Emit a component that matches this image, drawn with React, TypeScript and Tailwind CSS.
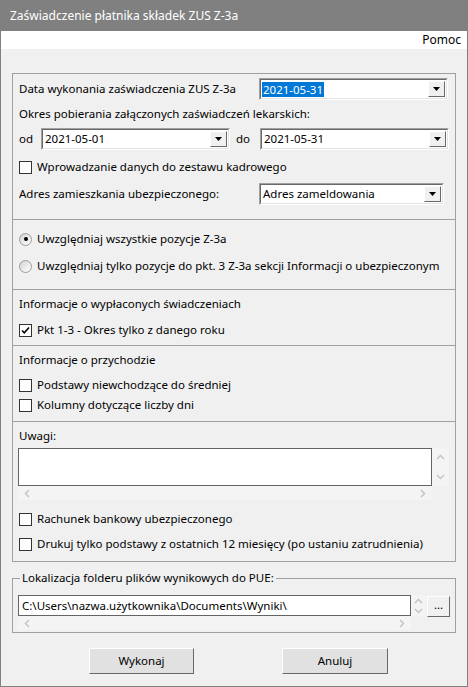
import React from "react";

const font = { fontFamily: '"Noto Sans", "Liberation Sans", sans-serif' };

function DropBtn() {
  return (
    <div className="w-[17px] h-full bg-[#f0f0f0] border border-t-white border-l-white border-b-[#696969] border-r-[#696969] flex items-center justify-center shrink-0">
      <svg width="7" height="4" viewBox="0 0 7 4"><path d="M0 0h7L3.5 4z" fill="#000" /></svg>
    </div>
  );
}

function Combo({ value, w, selected }: { value: string; w: string; selected?: boolean }) {
  return (
    <div className={`${w} h-[22px] border border-t-[#a0a0a0] border-l-[#a0a0a0] border-b-white border-r-white flex shrink-0`}>
      <div className="flex-1 flex border border-t-[#696969] border-l-[#696969] border-b-[#e3e3e3] border-r-[#e3e3e3] bg-white">
        <div className="flex-1 flex items-center pl-[1px]">
          <span className={selected ? "bg-[#0078d7] text-white px-[1px] leading-[15px]" : "px-[1px]"}>{value}</span>
        </div>
        <div className="p-[1px] h-full"><DropBtn /></div>
      </div>
    </div>
  );
}

function Check({ checked, label }: { checked?: boolean; label: string }) {
  return (
    <div className="flex items-center gap-[5px] h-[16px] whitespace-nowrap">
      <div className="w-[13px] h-[13px] border border-[#333333] bg-white flex items-center justify-center shrink-0">
        {checked && (
          <svg width="9" height="9" viewBox="0 0 9 9"><path d="M1 4.5l2.3 2.3L8 1.5" stroke="#000" strokeWidth="1.6" fill="none" /></svg>
        )}
      </div>
      <span>{label}</span>
    </div>
  );
}

function Radio({ checked, label }: { checked?: boolean; label: string }) {
  return (
    <div className="flex items-center gap-[5px] h-[16px] whitespace-nowrap">
      <div className="w-[13px] h-[13px] rounded-full border border-[#9a9a9a] bg-gradient-to-br from-[#d4d4d4] to-white flex items-center justify-center shrink-0">
        {checked && <div className="w-[4px] h-[4px] rounded-full bg-black" />}
      </div>
      <span>{label}</span>
    </div>
  );
}

function Chev({ d }: { d: string }) {
  return (
    <svg width="9" height="9" viewBox="0 0 9 9"><path d={d} stroke="#c4c4c4" strokeWidth="1.5" fill="none" /></svg>
  );
}

function Divider() {
  return <div className="h-px bg-[#a0a0a0] shrink-0" />;
}

function Btn({ label, w }: { label: string; w: string }) {
  return (
    <div className={`${w} h-[26px] bg-[#e1e1e1] border border-t-white border-l-white border-b-[#696969] border-r-[#696969] flex items-center justify-center`}>
      {label}
    </div>
  );
}

export default function App() {
  return (
    <div className="w-[468px] h-[687px] bg-[#f0f0f0] border border-[#808080] flex flex-col text-[11.5px] leading-[16px] text-black overflow-hidden" style={font}>
      <div className="h-[30px] bg-[#808080] text-white flex items-center pl-[9px] text-[12px] shrink-0">
        Zaświadczenie płatnika składek ZUS Z-3a
      </div>
      <div className="h-[18px] bg-white flex items-center justify-end pr-[6px] shrink-0 text-[12px]">Pomoc</div>

      <div className="flex flex-col px-[11px] pt-[24px]">
        <div className="border border-[#a0a0a0] flex flex-col">
          {/* Section 1 */}
          <div className="flex flex-col px-[6px] pt-[4px] pb-[14px]">
            <div className="flex items-center justify-between pr-[1px]">
              <span>Data wykonania zaświadczenia ZUS Z-3a</span>
              <Combo value="2021-05-31" w="w-[189px]" selected />
            </div>
            <div className="mt-[6px] h-[16px]">Okres pobierania załączonych zaświadczeń lekarskich:</div>
            <div className="flex items-center mt-[6px]">
              <span className="w-[22px] shrink-0">od</span>
              <Combo value="2021-05-01" w="w-[189px]" />
              <span className="ml-[6px] w-[24px] shrink-0">do</span>
              <Combo value="2021-05-31" w="w-[189px]" />
            </div>
            <div className="mt-[9px]"><Check label="Wprowadzanie danych do zestawu kadrowego" /></div>
            <div className="flex items-center justify-between mt-[8px] pr-[5px]">
              <span>Adres zamieszkania ubezpieczonego:</span>
              <Combo value="Adres zameldowania" w="w-[185px]" />
            </div>
          </div>
          <Divider />
          {/* Section 2 */}
          <div className="flex flex-col px-[6px] pt-[11px] pb-[15px] gap-[11px]">
            <Radio checked label="Uwzględniaj wszystkie pozycje Z-3a" />
            <Radio label="Uwzględniaj tylko pozycje do pkt. 3 Z-3a sekcji Informacji o ubezpieczonym" />
          </div>
          <Divider />
          {/* Section 3 */}
          <div className="flex flex-col px-[6px] pt-[6px] pb-[7px] gap-[10px]">
            <span className="h-[16px]">Informacje o wypłaconych świadczeniach</span>
            <Check checked label="Pkt 1-3 - Okres tylko z danego roku" />
          </div>
          <Divider />
          {/* Section 4 */}
          <div className="flex flex-col px-[6px] pt-[6px] pb-[8px]">
            <span className="h-[16px]">Informacje o przychodzie</span>
            <div className="mt-[9px]"><Check label="Podstawy niewchodzące do średniej" /></div>
            <div className="mt-[4px]"><Check label="Kolumny dotyczące liczby dni" /></div>
          </div>
          <Divider />
          {/* Section 5 */}
          <div className="flex flex-col px-[5px] pt-[6px] pb-[9px]">
            <span className="h-[16px] pl-[1px]">Uwagi:</span>
            <div className="mt-[4px] flex flex-col w-[431px]">
              <div className="flex">
                <div className="w-[414px] h-[38px] bg-white border border-[#646464]" />
                <div className="flex-1 bg-[#f4f4f4] flex flex-col items-center justify-between py-[5px]">
                  <Chev d="M1 6l3.5-3.5L8 6" />
                  <Chev d="M1 3l3.5 3.5L8 3" />
                </div>
              </div>
              <div className="h-[14px] bg-[#f4f4f4] flex items-center justify-between px-[5px] w-[414px]">
                <Chev d="M6 1L2.5 4.5 6 8" />
                <Chev d="M3 1l3.5 3.5L3 8" />
              </div>
            </div>
            <div className="mt-[11px] pl-[1px]"><Check label="Rachunek bankowy ubezpieczonego" /></div>
            <div className="mt-[9px] pl-[1px]"><Check label="Drukuj tylko podstawy z ostatnich 12 miesięcy (po ustaniu zatrudnienia)" /></div>
          </div>
        </div>

        {/* Lokalizacja group */}
        <div className="relative mt-[16px] border border-[#a0a0a0] px-[5px] pt-[16px] pb-[2px]">
          <span className="absolute left-[7px] top-[-9px] bg-[#f0f0f0] px-[2px] leading-[16px]">Lokalizacja folderu plików wynikowych do PUE:</span>
          <div className="flex items-start">
            <div className="flex flex-col w-[408px]">
              <div className="flex">
                <div className="w-[393px] h-[21px] bg-white border border-[#646464] flex items-center pl-[3px]">
                  C:\Users\nazwa.użytkownika\Documents\Wyniki\
                </div>
                <div className="flex-1 bg-[#f4f4f4] flex flex-col items-center justify-center">
                  <Chev d="M1 6l3.5-3.5L8 6" />
                  <Chev d="M1 3l3.5 3.5L8 3" />
                </div>
              </div>
              <div className="h-[14px] bg-[#f4f4f4] flex items-center justify-between px-[5px] w-[393px]">
                <Chev d="M6 1L2.5 4.5 6 8" />
                <Chev d="M3 1l3.5 3.5L3 8" />
              </div>
            </div>
            <div className="mt-[1px] ml-[1px] w-[23px] h-[21px] bg-[#f0f0f0] border border-t-white border-l-white border-b-[#696969] border-r-[#696969] flex items-center justify-center leading-none pb-[4px]">
              ...
            </div>
          </div>
        </div>

        <div className="flex mt-[15px] pl-[77px] gap-[88px]">
          <Btn label="Wykonaj" w="w-[105px]" />
          <Btn label="Anuluj" w="w-[106px]" />
        </div>
      </div>
    </div>
  );
}
